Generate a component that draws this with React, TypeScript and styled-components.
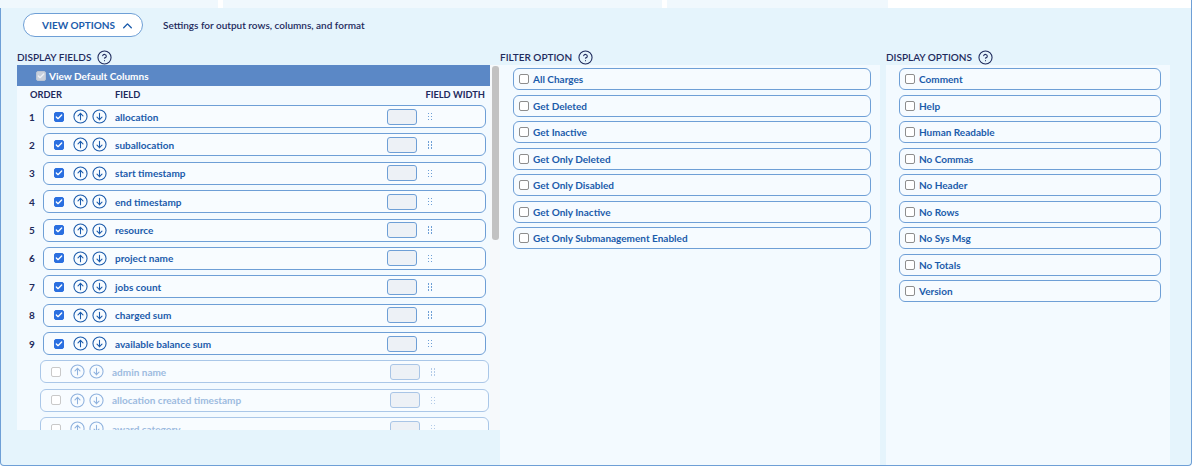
import React from 'react';
import styled, { createGlobalStyle } from 'styled-components';

const NAVY = '#1e2a5c';
const BLUE = '#1b5bab';
const BORDER = '#6e9fd6';

const GlobalStyle = createGlobalStyle`
  html, body { margin: 0; padding: 0; background: #fff; }
  body { font-family: Lato, "Open Sans", sans-serif; }
  * { box-sizing: border-box; }
`;

const Page = styled.div`
  width: 1200px;
  height: 472px;
  overflow: hidden;
  background: #fff;
`;

const TopStrip = styled.div`
  display: flex;
  gap: 5px;
  width: 1192px;
  height: 8px;
  border-right: 1px solid ${BORDER};
`;

const Tile = styled.div<{ $w?: number }>`
  flex: ${(p) => (p.$w ? 'none' : '1')};
  width: ${(p) => (p.$w ? `${p.$w}px` : 'auto')};
  background: ${(p) => (p.$w ? '#f0f8fd' : '#fff')};
`;

const Shell = styled.div`
  width: 1192px;
  height: 458px;
  background: #e5f4fc;
  border: 1px solid ${BORDER};
  border-top: none;
  border-radius: 0 0 4px 4px;
  display: flex;
  flex-direction: column;
`;

const Toolbar = styled.div`
  display: flex;
  align-items: center;
  gap: 20px;
  padding: 5px 0 0 22px;
`;

const ViewButton = styled.button`
  width: 120px;
  height: 24px;
  border: 1px solid ${BORDER};
  border-radius: 12px;
  background: #fff;
  color: ${BLUE};
  font-family: Lato, sans-serif;
  font-size: 10px;
  font-weight: 700;
  display: flex;
  align-items: center;
  justify-content: flex-start;
  gap: 6px;
  padding: 0 0 0 18px;
`;

const Description = styled.span`
  font-size: 10px;
  font-weight: 600;
  color: ${NAVY};
`;

const Columns = styled.div`
  flex: 1;
  min-height: 0;
  display: flex;
  padding: 0 21px 0 16px;
  margin-top: 12px;
`;

const Column = styled.div<{ $w: number; $ml?: number }>`
  width: ${(p) => p.$w}px;
  margin-left: ${(p) => p.$ml || 0}px;
  display: flex;
  flex-direction: column;
  flex: none;
`;

const SectionHead = styled.div`
  height: 16px;
  display: flex;
  align-items: center;
  gap: 6px;
  font-size: 10px;
  font-weight: 600;
  color: ${NAVY};
  text-transform: uppercase;
`;

const FieldsPanel = styled.div`
  height: 365px;
  display: flex;
  background: #f3faff;
  overflow: hidden;
`;

const ScrollContent = styled.div`
  flex: 1;
  display: flex;
  flex-direction: column;
  overflow: hidden;
`;

const ScrollBar = styled.div`
  width: 10px;
  flex: none;
  background: #f6f9fb;
  padding: 1px 1px 0 2px;
`;

const Thumb = styled.div`
  height: 174px;
  border-radius: 3px;
  background: #c2c2c2;
`;

const DefaultBar = styled.div`
  height: 21px;
  flex: none;
  background: #5b88c6;
  display: flex;
  align-items: center;
  gap: 3px;
  padding-left: 19px;
  color: #fff;
  font-size: 10px;
  font-weight: 700;
`;

const ColumnHeads = styled.div`
  height: 16px;
  flex: none;
  display: grid;
  grid-template-columns: 85px 1fr auto;
  align-items: center;
  padding: 0 5px 0 13px;
  font-size: 9.3px;
  font-weight: 700;
  color: ${NAVY};
`;

const RowList = styled.div`
  display: flex;
  flex-direction: column;
  gap: 5.375px;
  padding-top: 3px;
`;

const FieldRow = styled.div`
  display: flex;
  align-items: center;
  height: 23px;
  flex: none;
`;

const RowNumber = styled.span`
  width: 26px;
  padding-left: 12px;
  font-size: 10px;
  font-weight: 700;
  color: ${NAVY};
`;

const RowBox = styled.div<{ $off?: boolean }>`
  height: 23px;
  width: ${(p) => (p.$off ? 449 : 443)}px;
  margin-left: ${(p) => (p.$off ? -3 : 0)}px;
  border: 1px solid ${(p) => (p.$off ? '#aac7e8' : BORDER)};
  border-radius: 6px;
  background: #f8fcff;
  display: flex;
  align-items: center;
  padding: 0 53px 0 10px;
  color: ${(p) => (p.$off ? '#9dbbe0' : BLUE)};
`;

const Arrows = styled.span<{ $off?: boolean }>`
  display: flex;
  gap: 4px;
  margin-left: 9px;
  color: ${(p) => (p.$off ? '#8fb2de' : BLUE)};
  svg { display: block; }
`;

const FieldLabel = styled.span`
  flex: 1;
  margin-left: 8px;
  font-size: 10px;
  font-weight: 700;
`;

const WidthInput = styled.span<{ $off?: boolean }>`
  width: 30px;
  height: 16px;
  margin-left: ${(p) => (p.$off ? 2 : 0)}px;
  border: 1px solid ${(p) => (p.$off ? '#a9c5e6' : BORDER)};
  border-radius: 3px;
  background: #edf1f6;
`;

const DragDots = styled.span<{ $off?: boolean }>`
  margin-left: 11px;
  display: grid;
  grid-template-columns: 1.5px 1.5px;
  gap: 1.5px 1.5px;
  span {
    width: 1.5px;
    height: 1.5px;
    background: ${(p) => (p.$off ? '#b3cbe8' : '#6e9fd6')};
  }
`;

const Box = styled.span<{ $checked?: boolean; $muted?: boolean }>`
  width: 10px;
  height: 10px;
  flex: none;
  border-radius: 2px;
  border: 1px solid ${(p) => (p.$checked ? '#2a6fe0' : p.$muted ? '#c9c9c9' : '#8d8d8d')};
  background: ${(p) => (p.$checked ? '#2a6fe0' : '#fff')};
  display: flex;
  align-items: center;
  justify-content: center;
  svg { display: block; }
`;

const BarBox = styled(Box)`
  border-color: #b9c4d4;
  background: #c7d0dc;
`;

const OptionsPanel = styled.div<{ $pr: number }>`
  flex: 1;
  background: #f3faff;
  display: flex;
  flex-direction: column;
  gap: 4.5px;
  padding: 3px ${(p) => p.$pr}px 0 13px;
`;

const OptionItem = styled.div`
  height: 22px;
  flex: none;
  border: 1px solid ${BORDER};
  border-radius: 6px;
  background: #f6fbff;
  display: flex;
  align-items: center;
  gap: 4px;
  padding-left: 5px;
  font-size: 10px;
  font-weight: 700;
  color: ${BLUE};
`;

const Help = () => (
  <svg width="15" height="15" viewBox="0 0 24 24" fill="none" stroke={NAVY} strokeWidth="1.7" strokeLinecap="round" strokeLinejoin="round">
    <circle cx="12" cy="12" r="10.5" />
    <path d="M9.09 9a3 3 0 0 1 5.83 1c0 2-3 3-3 3" />
    <path d="M12 17h.01" />
  </svg>
);

const Check = ({ color = '#fff' }: { color?: string }) => (
  <svg width="8" height="8" viewBox="0 0 24 24" fill="none" stroke={color} strokeWidth="4" strokeLinecap="round" strokeLinejoin="round">
    <path d="M20 6 9 17l-5-5" />
  </svg>
);

const ArrowCircle = ({ down }: { down?: boolean }) => (
  <svg width="15" height="15" viewBox="0 0 24 24" fill="none" stroke="currentColor" strokeWidth="1.7" strokeLinecap="round" strokeLinejoin="round">
    <circle cx="12" cy="12" r="10.5" />
    {down ? (
      <>
        <path d="M12 7v10" />
        <path d="m8 13 4 4 4-4" />
      </>
    ) : (
      <>
        <path d="M12 17V7" />
        <path d="m8 11 4-4 4 4" />
      </>
    )}
  </svg>
);

const Chevron = () => (
  <svg width="13" height="13" viewBox="0 0 24 24" fill="none" stroke={BLUE} strokeWidth="2.6" strokeLinecap="round" strokeLinejoin="round">
    <path d="m19 16-7-7-7 7" />
  </svg>
);

const activeFields = [
  'allocation',
  'suballocation',
  'start timestamp',
  'end timestamp',
  'resource',
  'project name',
  'jobs count',
  'charged sum',
  'available balance sum',
];

const inactiveFields = ['admin name', 'allocation created timestamp', 'award category'];

const filterOptions = [
  'All Charges',
  'Get Deleted',
  'Get Inactive',
  'Get Only Deleted',
  'Get Only Disabled',
  'Get Only Inactive',
  'Get Only Submanagement Enabled',
];

const displayOptions = [
  'Comment',
  'Help',
  'Human Readable',
  'No Commas',
  'No Header',
  'No Rows',
  'No Sys Msg',
  'No Totals',
  'Version',
];

const Dots = ({ off }: { off?: boolean }) => (
  <DragDots $off={off}>
    {Array.from({ length: 6 }).map((_, i) => (
      <span key={i} />
    ))}
  </DragDots>
);

const Field = ({ label, index, off }: { label: string; index?: number; off?: boolean }) => (
  <FieldRow>
    <RowNumber>{index ?? ''}</RowNumber>
    <RowBox $off={off}>
      <Box $checked={!off} $muted={off}>{!off && <Check />}</Box>
      <Arrows $off={off}>
        <ArrowCircle />
        <ArrowCircle down />
      </Arrows>
      <FieldLabel>{label}</FieldLabel>
      <WidthInput $off={off} />
      <Dots off={off} />
    </RowBox>
  </FieldRow>
);

export default function App() {
  return (
    <Page>
      <GlobalStyle />
      <TopStrip>
        <Tile $w={218} />
        <Tile $w={439} />
        <Tile $w={221} />
        <Tile />
      </TopStrip>
      <Shell>
        <Toolbar>
          <ViewButton>
            VIEW OPTIONS
            <Chevron />
          </ViewButton>
          <Description>Settings for output rows, columns, and format</Description>
        </Toolbar>
        <Columns>
          <Column $w={483}>
            <SectionHead>
              Display Fields <Help />
            </SectionHead>
            <FieldsPanel>
              <ScrollContent>
                <DefaultBar>
                  <BarBox>
                    <Check color="#eef2f7" />
                  </BarBox>
                  View Default Columns
                </DefaultBar>
                <ColumnHeads>
                  <span>ORDER</span>
                  <span>FIELD</span>
                  <span>FIELD WIDTH</span>
                </ColumnHeads>
                <RowList>
                  {activeFields.map((f, i) => (
                    <Field key={f} label={f} index={i + 1} />
                  ))}
                  {inactiveFields.map((f) => (
                    <Field key={f} label={f} off />
                  ))}
                </RowList>
              </ScrollContent>
              <ScrollBar>
                <Thumb />
              </ScrollBar>
            </FieldsPanel>
          </Column>
          <Column $w={380}>
            <SectionHead>
              Filter Option <Help />
            </SectionHead>
            <OptionsPanel $pr={9}>
              {filterOptions.map((o) => (
                <OptionItem key={o}>
                  <Box />
                  {o}
                </OptionItem>
              ))}
            </OptionsPanel>
          </Column>
          <Column $w={284} $ml={6}>
            <SectionHead>
              Display Options <Help />
            </SectionHead>
            <OptionsPanel $pr={9}>
              {displayOptions.map((o) => (
                <OptionItem key={o}>
                  <Box />
                  {o}
                </OptionItem>
              ))}
            </OptionsPanel>
          </Column>
        </Columns>
      </Shell>
    </Page>
  );
}
